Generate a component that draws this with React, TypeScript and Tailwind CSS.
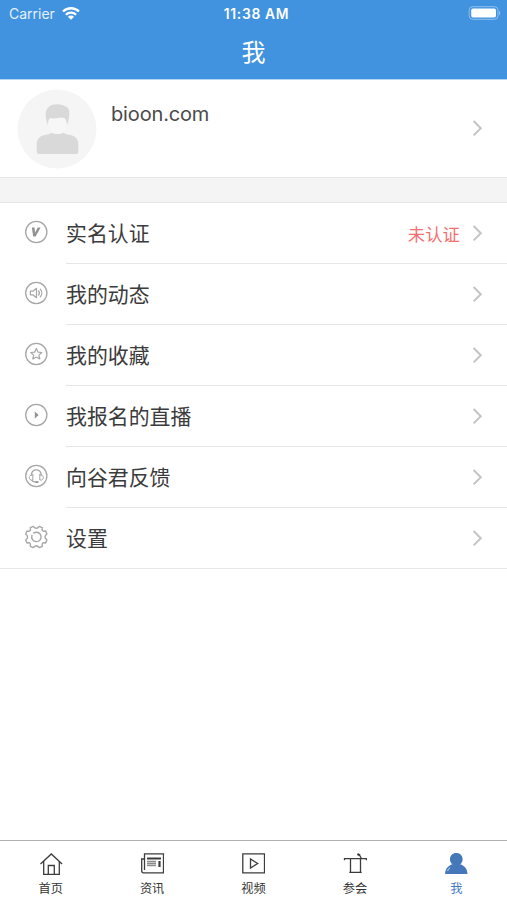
import type { ReactNode } from 'react';

const BadgeCircle = ({ children }: { children: ReactNode }) => (
  <svg width="24" height="24" viewBox="0 0 24 24" fill="none" stroke="#a6a6a6" strokeWidth="1.3" strokeLinejoin="round" strokeLinecap="round">
    <circle cx="12.3" cy="12" r="10.6" />
    {children}
  </svg>
);

const VerifiedIcon = () => (
  <BadgeCircle>
    <path d="M7.8 7.6h2.800l.4 5.200 2.800-5.200h2.800L11.600 16.600H9.200z" fill="#929292" stroke="none" />
  </BadgeCircle>
);

const SpeakerIcon = () => (
  <BadgeCircle>
    <path d="M6.4 10.200h2.500L12.500 7.300v9.400L8.900 13.800H6.400z" strokeWidth="1.200" />
    <path d="M14.600 9.800c1 1.300 1 3.100 0 4.400M16.300 8.200c2 2.200 2 5.400 0 7.600" strokeWidth="1.200" />
  </BadgeCircle>
);

const StarIcon = () => (
  <BadgeCircle>
    <path d="M12.300 6.600l1.600 3.500 3.900.4-2.900 2.600.9 3.900-3.500-2-3.500 2 .9-3.900-2.900-2.600 3.900-.4z" strokeWidth="1.200" />
  </BadgeCircle>
);

const PlayIcon = () => (
  <BadgeCircle>
    <path d="M10.800 8.400v7.200l3.900-3.600z" fill="#929292" stroke="none" />
  </BadgeCircle>
);

const HeadsetIcon = () => (
  <BadgeCircle>
    <path d="M7.300 11.200c.3-3.400 2.400-5.300 5-5.300s4.700 1.900 5 5.300" />
    <path d="M8.800 10.800v5.200c-2.300.5-3.500-.7-3.500-2.400s1.300-3 3.500-2.800zM15.800 10.800v5.200c2.300.5 3.500-.7 3.500-2.400s-1.300-3-3.500-2.800z" strokeWidth="1" />
    <path d="M8 16.500c.9 1.200 2.500 1.600 4.600 1.500" />
    <ellipse cx="13.200" cy="18" rx="1.500" ry=".9" fill="#929292" stroke="none" />
  </BadgeCircle>
);

const GearIcon = () => (
  <svg width="24" height="24" viewBox="0 0 24 24" fill="none" stroke="#a6a6a6" strokeWidth="1.4" strokeLinejoin="round" strokeLinecap="round">
    <path d="M9.300 1.400Q12.300 5.200 15.300 1.400L18.300 2.700Q17.300 7 21.600 6L22.900 9Q19.100 12 22.900 15L21.600 18Q17.300 17 18.300 21.300L15.300 22.600Q12.300 18.800 9.300 22.600L6.300 21.300Q7.300 17 3 18L1.700 15Q5.500 12 1.700 9L3 6Q7.300 7 6.300 2.700Z" />
    <path d="M9.700 8.100a4.700 4.700 0 1 1-1.700 2.200" />
  </svg>
);

const Chevron = () => (
  <svg width="11" height="17" viewBox="0 0 11 17" fill="none" stroke="#c4c4c8" strokeWidth="2">
    <path d="M1.600 1l7.200 7.200-7.200 7.200" />
  </svg>
);

const Avatar = () => (
  <svg width="80" height="80" viewBox="0 0 80 80">
    <circle cx="40" cy="40" r="39.5" fill="#f5f5f5" />
    <path d="M31 36.500c-1.500-4-2.600-8-2.300-12 .4-6 5-9.200 11.300-9.200 4 0 5.500.7 7.500 1.700 4 .8 5.200 4.500 4.800 8.500-.3 4-1 7.500-2.300 11 0-3-.7-5.500-2.500-7.500-3-1-5-.6-7 0-3.500.8-5.500.2-8 .4-1.300 2-1.700 4.500-1.500 7.100z" fill="#d9d9d9" />
    <path d="M31.500 35c.8 5 3.500 11.200 9 11.200s8.200-6.200 9-11.200l-2-5H33z" fill="#f7f7f7" />
    <path d="M19.700 62.500v-7c0-5.500 3-8.200 7-9.200 3.800-.7 5.800-1.400 8.300-2.600 1.800 1 3.600 1.300 5.500 1.300s3.700-.3 5.500-1.300c2.500 1.200 4.500 1.900 8.300 2.600 4 1 7 3.700 7 9.200v7c0 1.700-.8 2.500-2.500 2.500H22.200c-1.700 0-2.500-.8-2.500-2.500z" fill="#d9d9d9" />
  </svg>
);

const rows: { label: string; icon: ReactNode; note?: string }[] = [
  { label: '实名认证', icon: <VerifiedIcon />, note: '未认证' },
  { label: '我的动态', icon: <SpeakerIcon /> },
  { label: '我的收藏', icon: <StarIcon /> },
  { label: '我报名的直播', icon: <PlayIcon /> },
  { label: '向谷君反馈', icon: <HeadsetIcon /> },
  { label: '设置', icon: <GearIcon /> },
];

const tabs: { label: string; icon: ReactNode; active?: boolean }[] = [
  {
    label: '首页',
    icon: (
      <>
        <path d="M1.500 12L12.300 2l10.800 10M4.700 9.500v12.800h15.600V9.500" />
        <path d="M9.300 22.300v-8.800h6v8.800" />
      </>
    ),
  },
  {
    label: '资讯',
    icon: (
      <>
        <path d="M4.500 1.800h19v19H3.500c-1.300 0-1.800-.7-1.800-2V7h2.800zM4.500 7v11" />
        <path d="M7 6.500h14" strokeWidth="2" />
        <path d="M7 9.500h9M7 11.500h9M7 13.500h9" stroke="#8c8c8c" />
        <path d="M19.500 9v6" strokeWidth="2.200" />
      </>
    ),
  },
  {
    label: '视频',
    icon: (
      <>
        <path d="M1.800 1.800h21.700v19H1.800z" />
        <path d="M9.500 7v9l7.200-4.500z" />
      </>
    ),
  },
  {
    label: '参会',
    icon: (
      <>
        <path d="M1.500 8.300V6.600h21.800v1.700" />
        <path d="M7.500 6.600v13.700M17.500 6.600v13.700M6.300 20.300h12.400M18.500 6.500l-2.300-4" />
        <path d="M14.400 2l2.600 1.300" strokeWidth="2" />
      </>
    ),
  },
  {
    label: '我',
    active: true,
    icon: (
      <>
        <path d="M12.300 1.100c3.800 0 6.300 2.600 6.300 6.100 0 2.400-1 4-2.500 5 4.600 1.400 7.200 4.800 7.400 9.700H1.100c.2-4.900 2.800-8.300 7.400-9.700-1.500-1-2.500-2.600-2.500-5 0-3.500 2.500-6.100 6.300-6.100z" fill="#4478b8" stroke="none" />
        <path d="M3.600 19c.5-1.600 1.300-2.500 2.500-3.300" stroke="#d5e3f4" strokeWidth="1" />
      </>
    ),
  },
];

export default function App() {
  return (
    <div className="flex h-[900px] w-[507px] flex-col overflow-hidden bg-white font-['Inter','Noto_Sans_CJK_SC',sans-serif] text-[#3b3b3b]">
      <header className="h-20 shrink-0 border-b border-[#b4d5f2] bg-[#4193e0] text-white">
        <div className="grid h-7 grid-cols-3 items-center pl-[9px] pr-[6px] leading-7">
          <div className="flex items-center gap-[7px]">
            <span className="text-[14px] text-[#e4f1fc]">Carrier</span>
            <svg className="-mt-0.5" width="18" height="13" viewBox="0 0 18 13" fill="none" stroke="white" strokeWidth="2.300">
              <path d="M1 4.500a11.500 11.500 0 0 1 16 0M3.900 7.700a7.300 7.300 0 0 1 10.200 0" />
              <path d="M9 12.800L5.900 9.700a4.400 4.400 0 0 1 6.200 0z" fill="white" stroke="none" />
            </svg>
          </div>
          <span className="pl-[3px] text-center text-[13.8px] font-semibold tracking-[0.7px] whitespace-nowrap">11:38 AM</span>
          <svg className="-mt-0.5 justify-self-end" width="33" height="14" viewBox="0 0 33 14">
            <rect x="1.200" y=".7" width="28.800" height="12.600" rx="3.500" fill="none" stroke="#8fc0ee" strokeWidth="1" />
            <rect x="3.200" y="2.500" width="24.800" height="9" rx="1.800" fill="white" />
            <path d="M31 4.700c1.500.6 1.500 4 0 4.600z" fill="#8fc0ee" />
          </svg>
        </div>
        <h1 className="pt-px text-center text-2xl leading-[48px] font-normal">我</h1>
      </header>

      <section className="flex h-[98px] shrink-0 items-center border-b border-[#e6e6e6] pr-[24px] pl-[17px]">
        <Avatar />
        <span className="mb-[29px] ml-[14px] flex-1 text-[20px] leading-6 tracking-[-0.15px] text-[#4a4a4a]">bioon.com</span>
        <Chevron />
      </section>
      <div className="h-[25px] shrink-0 border-b border-[#e6e6e6] bg-[#f4f4f4]" />

      <ul className="border-b border-[#e6e6e6]">
        {rows.map((row, i) => (
          <li key={row.label} className="flex pl-6">
            <div className="flex w-[42px] items-center pb-[3px]">{row.icon}</div>
            <div className={`flex flex-1 items-center pr-[24px] ${i < rows.length - 1 ? 'h-[61px] border-b border-[#e6e6e6]' : 'h-[60px]'}`}>
              <span className="flex-1 pt-[2px] text-[20.9px] leading-[30px]">{row.label}</span>
              {row.note && <span className="mt-[4px] mr-[12px] text-[17.4px] leading-6 text-[#f47070]">{row.note}</span>}
              <Chevron />
            </div>
          </li>
        ))}
      </ul>

      <nav className="mt-auto grid h-[60px] shrink-0 grid-cols-5 border-t border-[#b0b0b0]">
        {tabs.map(tab => (
          <a key={tab.label} className={`flex flex-col items-center pt-[11px] text-[12.2px] leading-4 ${tab.active ? 'text-[#4478c8]' : 'text-[#333]'}`}>
            <svg width="24" height="24" viewBox="0 0 24 24" fill="none" stroke="#3c3c3c" strokeWidth="1.300">
              {tab.icon}
            </svg>
            <span className="mt-[5px]">{tab.label}</span>
          </a>
        ))}
      </nav>
    </div>
  );
}
